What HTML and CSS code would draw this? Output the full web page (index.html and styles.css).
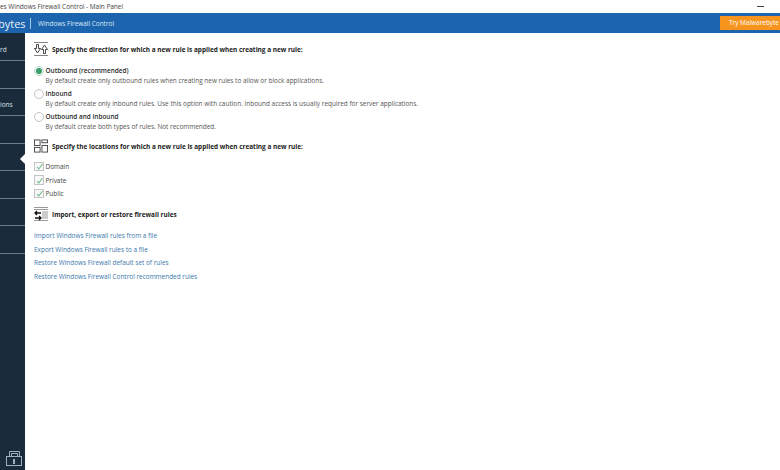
FILE: index.html
```html
<!DOCTYPE html>
<html lang="en">
<head>
  <meta charset="UTF-8" />
  <title>Windows Firewall Control - Main Panel</title>
  <link rel="stylesheet" href="styles.css">
</head>
<body>
  <div class="titlebar">
    <span class="title-text">es Windows Firewall Control - Main Panel</span>
    <span class="min-btn"></span>
  </div>

  <div class="header">
    <span class="brand">bytes</span>
    <span class="brand-line"></span>
    <span class="product">Windows Firewall Control</span>
    <span class="try-btn">Try Malwarebyte</span>
  </div>

  <div class="app">
    <div class="sidebar">
      <div class="nav-item">rd</div>
      <div class="nav-item"></div>
      <div class="nav-item">ions</div>
      <div class="nav-item"></div>
      <div class="nav-item active"></div>
      <div class="nav-item"></div>
      <div class="nav-item"></div>
      <div class="nav-item"></div>
      <svg class="lock" width="16" height="18" viewBox="0 0 16 18" fill="none" stroke="#9fb0bd" stroke-width="1">
        <path d="M3.5 6.5v-5h10v5"/>
        <path d="M5.5 6.5v-3h6v3"/>
        <rect x="0.5" y="6.5" width="15" height="9"/>
        <path d="M8 9v5" stroke-width="2"/>
      </svg>
    </div>

    <div class="content">
      <div class="section-head">
        <svg class="section-icon" width="14" height="14" viewBox="0 0 14 14" fill="none" stroke="#333" stroke-width="0.9">
          <path d="M0 0.5h14M0 13.5h14" stroke="#777"/>
          <path d="M2.5 2.5h2v4h2l-3 4.5-3-4.5h2z"/>
          <path d="M9.5 11.5h2v-4h2l-3-4.5-3 4.5h2z"/>
        </svg>
        <span>Specify the direction for which a new rule is applied when creating a new rule:</span>
      </div>

      <div class="radio-list">
        <div class="radio-row">
          <span class="radio checked"></span>
          <div>
            <div class="radio-name">Outbound (recommended)</div>
            <div class="radio-desc">By default create only outbound rules when creating new rules to allow or block applications.</div>
          </div>
        </div>
        <div class="radio-row">
          <span class="radio"></span>
          <div>
            <div class="radio-name">Inbound</div>
            <div class="radio-desc">By default create only inbound rules. Use this option with caution. Inbound access is usually required for server applications.</div>
          </div>
        </div>
        <div class="radio-row">
          <span class="radio"></span>
          <div>
            <div class="radio-name">Outbound and inbound</div>
            <div class="radio-desc">By default create both types of rules. Not recommended.</div>
          </div>
        </div>
      </div>

      <div class="section-head locations">
        <svg class="section-icon" width="15" height="14" viewBox="0 0 15 14" fill="none" stroke="#444" stroke-width="1">
          <rect x="0.5" y="0.5" width="6" height="6"/>
          <rect x="8.5" y="0.5" width="6" height="3"/>
          <rect x="0.5" y="8.5" width="6" height="5"/>
          <rect x="8.5" y="6.5" width="6" height="7"/>
        </svg>
        <span>Specify the locations for which a new rule is applied when creating a new rule:</span>
      </div>

      <div class="check-list">
        <div class="check-row"><span class="check"><svg width="9" height="9" viewBox="0 0 9 9" fill="none" stroke="#6cb688" stroke-width="1.1"><path d="M2 5l1.8 2 3.7-5"/></svg></span>Domain</div>
        <div class="check-row"><span class="check"><svg width="9" height="9" viewBox="0 0 9 9" fill="none" stroke="#6cb688" stroke-width="1.1"><path d="M2 5l1.8 2 3.7-5"/></svg></span>Private</div>
        <div class="check-row"><span class="check"><svg width="9" height="9" viewBox="0 0 9 9" fill="none" stroke="#6cb688" stroke-width="1.1"><path d="M2 5l1.8 2 3.7-5"/></svg></span>Public</div>
      </div>

      <div class="section-head import">
        <svg class="section-icon" width="14" height="14" viewBox="0 0 14 14" fill="none" stroke="#111" stroke-width="1.3">
          <path d="M0 0.5h14M0 2.5h14M8 5h6M8 7h6M8 9h6M8 11h6M0 13.5h14" stroke="#999" stroke-width="1"/>
          <path d="M1 6h6M3 4l-2 2 2 2"/>
          <path d="M7 11H1M5 9l2 2-2 2"/>
        </svg>
        <span>Import, export or restore firewall rules</span>
      </div>

      <div class="links">
        <a class="link" href="#">Import Windows Firewall rules from a file</a>
        <a class="link" href="#">Export Windows Firewall rules to a file</a>
        <a class="link" href="#">Restore Windows Firewall default set of rules</a>
        <a class="link" href="#">Restore Windows Firewall Control recommended rules</a>
      </div>
    </div>
  </div>
</body>
</html>
```

FILE: styles.css
```css
* {
  box-sizing: border-box;
}

html, body {
  height: 100%;
}

body {
  margin: 0;
  display: flex;
  flex-direction: column;
  overflow: hidden;
  background-color: #fff;
  color: #333;
  font-family: "Open Sans", "Noto Sans", sans-serif;
  font-size: 6.45px;
}

.titlebar {
  height: 13px;
  flex: none;
  display: flex;
  justify-content: space-between;
  align-items: center;
  color: #444;
}

.min-btn {
  width: 7px;
  height: 1px;
  margin-right: 16px;
  background-color: #444;
}

.header {
  height: 20px;
  flex: none;
  display: flex;
  align-items: center;
  background-color: #1c65ae;
  color: #dce9f5;
}

.brand {
  width: 32px;
  margin-left: -2px;
  font-size: 11px;
  color: #e8f0f8;
}

.brand-line {
  width: 1px;
  height: 11px;
  background-color: #a9c6e2;
}

.product {
  margin-left: 7px;
}

.try-btn {
  margin-left: auto;
  width: 60px;
  height: 14px;
  padding-left: 9px;
  flex: none;
  white-space: nowrap;
  line-height: 14px;
  background-color: #f7941d;
  color: #fff;
}

.app {
  flex: 1;
  display: flex;
  min-height: 0;
}

.sidebar {
  position: relative;
  width: 25px;
  padding-top: 0.5px;
  flex: none;
  background-color: #1a2b3c;
  color: #dfe5ea;
}

.nav-item {
  position: relative;
  height: 27.5px;
  padding-top: 11px;
  border-bottom: 1px solid #6d7c89;
  white-space: nowrap;
}

.nav-item.active::after {
  content: "";
  position: absolute;
  right: 0;
  top: 10px;
  border: 5px solid transparent;
  border-left-width: 0;
  border-right-color: #fff;
}

.lock {
  position: absolute;
  left: 6px;
  bottom: 2px;
}

.content {
  flex: 1;
  padding: 8px 0 0 9px;
}

.section-head {
  display: flex;
  align-items: center;
  height: 16px;
  font-weight: 700;
  color: #222;
}

.section-icon {
  width: 18px;
  flex: none;
  padding-right: 4px;
}

.radio-list {
  margin-top: 9px;
}

.radio-row {
  display: flex;
  height: 23px;
}

.radio {
  width: 10px;
  height: 10px;
  margin-right: 1.5px;
  flex: none;
  border: 1px solid #c4c4c4;
  border-radius: 50%;
  background-color: #fff;
}

.radio.checked {
  border-color: #b5d3c3;
  background: radial-gradient(circle, #3d9e6e 0 2.8px, #fff 3.3px);
}

.radio-name {
  line-height: 10px;
  font-weight: 600;
  color: #2a2a2a;
}

.radio-desc {
  line-height: 9px;
  color: #555;
}

.locations {
  margin-top: 3px;
}

.check-list {
  margin-top: 5.5px;
}

.check-row {
  display: flex;
  align-items: center;
  height: 13.7px;
  color: #444;
}

.check {
  width: 9.5px;
  height: 9.5px;
  margin-right: 2px;
  display: flex;
  border: 1px solid #c4c4c4;
  background-color: #f8f8f8;
}

.check svg {
  margin: -0.5px;
  flex: none;
}

.import {
  margin-top: 5.7px;
}

.links {
  margin-top: 6.6px;
  display: flex;
  flex-direction: column;
}

.link {
  height: 13.7px;
  line-height: 13.7px;
  color: #3a78ac;
  text-decoration: none;
}
```
